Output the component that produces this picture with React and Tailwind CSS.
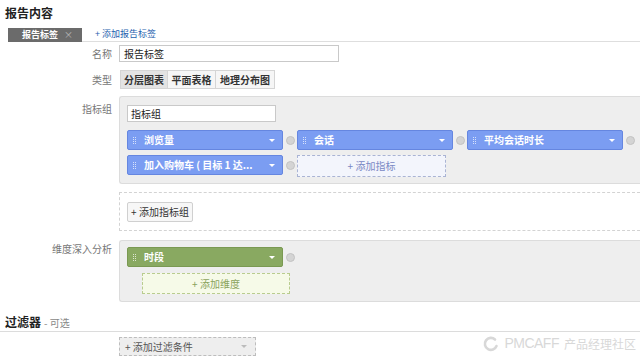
import React from "react";

function Dots() {
  return (
    <div className="grid grid-cols-2 gap-x-[1px] gap-y-[1px] w-[3px]">
      {Array.from({ length: 8 }).map((_, i) => (
        <span key={i} className="w-[1px] h-[1px] bg-white/70" />
      ))}
    </div>
  );
}

function Caret({ color = "border-t-white" }) {
  return <span className={`w-0 h-0 border-l-[3px] border-r-[3px] border-t-[3px] border-l-transparent border-r-transparent ${color}`} />;
}

function Remove() {
  return (
    <div className="w-[14px] flex justify-center">
      <span className="w-[9px] h-[9px] rounded-full bg-[#d4d4d4] border border-[#c2c2c2]" />
    </div>
  );
}

function Chip({ label, green }) {
  return (
    <div className="flex items-center">
      <div
        className={`w-[156px] h-[20px] rounded-[2px] border flex items-center pl-[5px] pr-[7px] text-white font-bold text-[10px] ${
          green ? "bg-[#89a961] border-[#7a9952]" : "bg-[#7b9df2] border-[#6586e0]"
        }`}
      >
        <Dots />
        <span className="ml-[8px] flex-1 whitespace-nowrap overflow-hidden leading-[18px]">{label}</span>
        <Caret />
      </div>
      <Remove />
    </div>
  );
}

export default function App() {
  return (
    <div className="w-[640px] h-[362px] overflow-hidden bg-white relative font-['Noto_Sans_CJK_SC','Liberation_Sans',sans-serif] text-[#333] text-[10px]">
      <div className="pl-[5px] pt-[5px] text-[12px] font-bold leading-[16px] text-[#222]">报告内容</div>

      <div className="mt-[6px] flex items-end h-[15px]">
        <div className="ml-[8px] w-[74px] h-[14px] bg-[#6b6b6b] flex items-center justify-between pl-[14px] pr-[9px]">
          <span className="text-white font-bold text-[9px] leading-[14px]">报告标签</span>
          <span className="text-[#bbb] text-[9px] leading-[14px]">×</span>
        </div>
        <div className="flex-1 border-b border-[#dedede] h-[15px] pl-[13px]">
          <span className="text-[#1f5fae] text-[9px] leading-[13px] block">+ 添加报告标签</span>
        </div>
      </div>

      <div className="mt-[3px] grid grid-cols-[112px_1fr] gap-x-[7px] items-center">
        <div className="text-right text-[#777] leading-[17px]">名称</div>
        <div className="w-[220px] h-[17px] border border-[#c9c9c9] px-[4px] leading-[15px] text-[#222]">报告标签</div>
      </div>

      <div className="mt-[8px] grid grid-cols-[112px_1fr] gap-x-[7px] items-center">
        <div className="text-right text-[#777] leading-[19px]">类型</div>
        <div className="flex h-[19px] ml-[1px]">
          <div className="w-[48px] border border-[#d5d5d5] bg-[#e3e3e3] font-bold text-center leading-[17px] text-[#333]">分层图表</div>
          <div className="w-[48px] border border-l-0 border-[#d5d5d5] bg-[#f6f6f6] font-bold text-center leading-[17px] text-[#333]">平面表格</div>
          <div className="w-[59px] border border-l-0 border-[#d5d5d5] bg-[#f6f6f6] font-bold text-center leading-[17px] text-[#333]">地理分布图</div>
        </div>
      </div>

      <div className="mt-[7px] grid grid-cols-[112px_1fr] gap-x-[7px]">
        <div className="text-right text-[#777] pt-[5px]">指标组</div>
        <div className="h-[88px] bg-[#eeeeee] border border-r-0 border-[#dcdcdc] rounded-l-[3px] pl-[7px] pt-[8px]">
          <div className="w-[149px] h-[17px] bg-white border border-[#c9c9c9] px-[3px] leading-[15px] text-[#222]">指标组</div>
          <div className="mt-[8px] flex">
            <Chip label="浏览量" />
            <Chip label="会话" />
            <Chip label="平均会话时长" />
          </div>
          <div className="mt-[5px] flex items-start">
            <Chip label="加入购物车 ( 目标 1 达..." />
            <div className="w-[149px] h-[22px] border border-dashed border-[#aab4d4] bg-[#f3f5fc] text-[#7a88c4] text-center leading-[20px]">+ 添加指标</div>
          </div>
        </div>
      </div>

      <div className="mt-[8px] ml-[119px] h-[39px] border border-r-0 border-dashed border-[#d3d3d3] pl-[7px] pt-[9px]">
        <div className="w-[66px] h-[20px] border border-[#d0d0d0] bg-[#f7f7f7] rounded-[2px] text-center leading-[18px] text-[#333]">+ 添加指标组</div>
      </div>

      <div className="mt-[9px] grid grid-cols-[112px_1fr] gap-x-[7px]">
        <div className="text-right text-[#777] pt-[1px]">维度深入分析</div>
        <div className="h-[62px] bg-[#eeeeee] border border-r-0 border-[#dcdcdc] rounded-l-[3px] pl-[7px] pt-[6px]">
          <Chip label="时段" green />
          <div className="mt-[6px] ml-[15px] w-[148px] h-[21px] border border-dashed border-[#b9cc8f] bg-[#f6fae8] text-[#8aa35c] text-center leading-[19px]">+ 添加维度</div>
        </div>
      </div>

      <div className="mt-[12px] border-b border-[#dcdcdc] pl-[5px] pb-[1px] flex items-baseline">
        <span className="text-[12px] font-bold text-[#222] leading-[16px]">过滤器</span>
        <span className="ml-[3px] text-[#888]">- 可选</span>
      </div>

      <div className="mt-[5px] ml-[119px] w-[137px] h-[19px] border border-dashed border-[#bdbdbd] bg-[#eeeeee] flex items-center pl-[5px] pr-[8px]">
        <span className="flex-1 text-[#555] leading-[17px]">+ 添加过滤条件</span>
        <Caret color="border-t-[#bbb]" />
      </div>

      <div className="absolute right-[4px] bottom-[8px] flex items-center gap-[5px] text-[#d8d8d8]">
        <svg width="16" height="16" viewBox="0 0 16 16" fill="none">
          <path d="M12 3.5A6 6 0 1 0 13.5 10" stroke="#d8d8d8" strokeWidth="2.6" strokeLinecap="round" />
        </svg>
        <span className="text-[14px] font-['Liberation_Sans',sans-serif] tracking-[-0.5px]">PMCAFF</span>
        <span className="text-[12px]">产品经理社区</span>
      </div>
    </div>
  );
}
